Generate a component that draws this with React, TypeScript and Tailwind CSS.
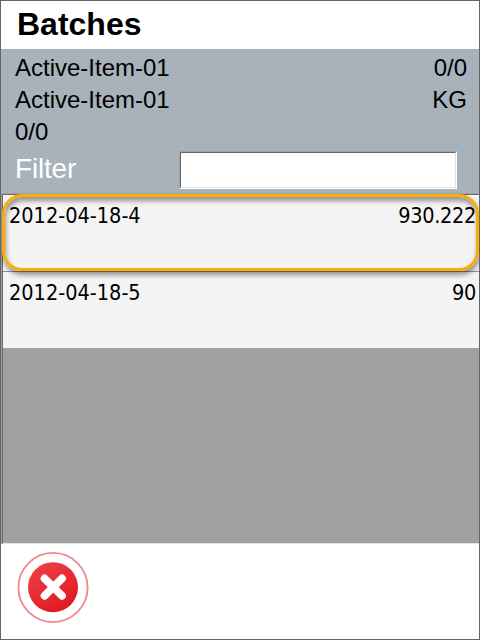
const batches = [
  { id: "2012-04-18-4", quantity: "930.222", selected: true },
  { id: "2012-04-18-5", quantity: "90", selected: false },
];

function CancelIcon() {
  return (
    <svg className="block" width="72" height="72" viewBox="0 0 72 72" fill="none">
      <defs>
        <linearGradient id="red" x1="18" y1="12" x2="50" y2="60" gradientUnits="userSpaceOnUse">
          <stop stopColor="#ee4048" />
          <stop offset="1" stopColor="#df171f" />
        </linearGradient>
      </defs>
      <circle cx="36" cy="35.5" r="34.6" stroke="#ec8a8e" strokeWidth="1.8" />
      <circle cx="36" cy="35.2" r="25" fill="url(#red)" />
      <path d="M27.6 26.4L45 43.8M45 26.4L27.6 43.8" stroke="#fff" strokeWidth="7.8" strokeLinecap="round" />
    </svg>
  );
}

export default function App() {
  return (
    <div className="flex h-[640px] w-[480px] flex-col overflow-hidden border border-[#656565] bg-white font-['Liberation_Sans',Arial,sans-serif] text-black">
      <h1 className="h-12 shrink-0 pl-4 text-[32px] font-bold leading-[46px]">Batches</h1>

      <section className="h-[144px] shrink-0 bg-[#a7b2bb] pl-[14px] pr-3 pt-[3px] text-2xl leading-8">
        <div className="flex justify-between">
          <span>Active-Item-01</span>
          <span>0/0</span>
        </div>
        <div className="flex justify-between">
          <span>Active-Item-01</span>
          <span>KG</span>
        </div>
        <div>0/0</div>
        <div className="flex h-[42px] items-start justify-between pr-[10px] pt-[3px]">
          <label htmlFor="filter" className="text-[28px] leading-9 tracking-[-0.2px] text-white">Filter</label>
          <div className="h-[38px] w-[278px] border border-b-white border-l-[#a0a0a0] border-r-white border-t-[#a0a0a0]">
            <input
              id="filter"
              className="block h-full w-full border border-b-[#e3e3e3] border-l-[#696969] border-r-[#e3e3e3] border-t-[#696969] bg-white px-1 outline-none"
            />
          </div>
        </div>
      </section>

      <main className="h-[351px] shrink-0 border-l border-t border-[#a0a0a0]">
        <div className="h-full border-b border-l border-t border-b-[#e3e3e3] border-l-[#696969] border-t-[#696969] bg-[#a0a0a0] font-['DejaVu_Sans_Condensed','DejaVu_Sans',sans-serif] text-[21.5px]">
          {batches.map((batch) => (
            <div
              key={batch.id}
              className={`relative flex justify-between bg-[#f4f4f4] pl-1.5 pr-[3px] leading-[42px] ${
                batch.selected ? "z-10 h-[77px] border-b border-[#909090]" : "h-[76px]"
              }`}
            >
              <span>{batch.id}</span>
              <span className="tracking-[-0.3px]">{batch.quantity}</span>
              {batch.selected && (
                <div className="pointer-events-none absolute -left-px -top-px right-0 h-[77px] rounded-[20px] border-[3px] border-[#faac0a] shadow-[1px_4px_5px_rgba(0,0,0,0.4),inset_1px_4px_5px_rgba(0,0,0,0.4)]" />
              )}
            </div>
          ))}
        </div>
      </main>

      <footer className="flex-1 pl-4 pt-2">
        <button type="button" aria-label="Cancel" className="block">
          <CancelIcon />
        </button>
      </footer>
    </div>
  );
}
